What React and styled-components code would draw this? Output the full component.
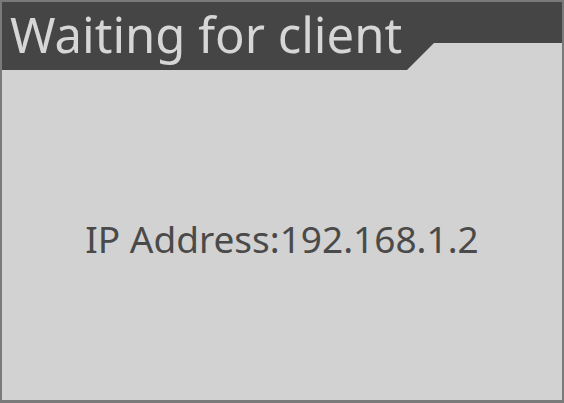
import styled, { createGlobalStyle } from 'styled-components';

const GlobalStyle = createGlobalStyle`
  html, body {
    margin: 0;
    padding: 0;
    background: #d2d2d2;
  }
  body {
    font-family: 'Noto Sans', 'Open Sans', sans-serif;
  }
`;

const Frame = styled.div`
  box-sizing: border-box;
  width: 564px;
  height: 403px;
  border: 2px solid #7a7a7a;
  border-bottom-width: 3px;
  background: #d2d2d2;
  display: flex;
  flex-direction: column;
`;

const Header = styled.div`
  box-sizing: border-box;
  height: 68px;
  background: #454545;
  clip-path: polygon(0 0, 100% 0, 100% 41px, 432px 41px, 405px 68px, 0 68px);
  display: flex;
  align-items: flex-start;
  padding: 8px 0 0 8px;
`;

const Title = styled.h1`
  margin: 0;
  font-size: 49px;
  font-weight: 400;
  line-height: 1;
  color: #d6d6d6;
  white-space: nowrap;
`;

const Body = styled.div`
  flex: 1;
  display: flex;
  align-items: center;
  justify-content: center;
  padding-top: 7px;
`;

const Address = styled.div`
  font-size: 37px;
  color: #4a4a4a;
  line-height: 1;
  white-space: nowrap;
`;

const App = () => {
  return (
    <>
      <GlobalStyle />
      <Frame>
        <Header>
          <Title>Waiting for client</Title>
        </Header>
        <Body>
          <Address>IP Address:192.168.1.2</Address>
        </Body>
      </Frame>
    </>
  );
};

export default App;
